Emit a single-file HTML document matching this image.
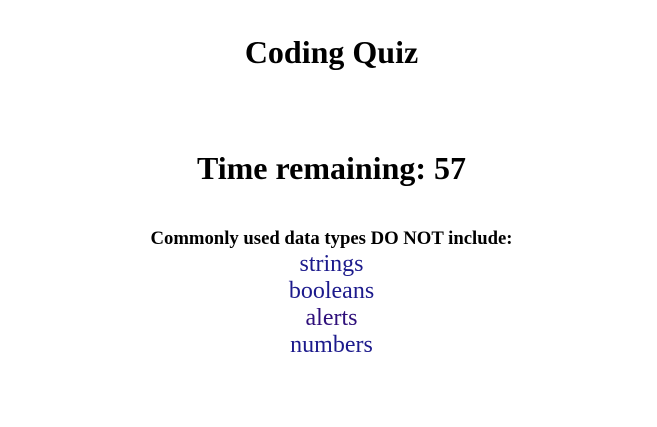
<!DOCTYPE html>
<html><head><style>
body{margin:0;width:657px;height:427px;background:#fff;font-family:"Liberation Serif",serif;position:relative;text-align:center;color:#000}
div{position:absolute;left:3px;width:657px;white-space:nowrap}
.h{font-weight:bold;font-size:32px;line-height:36px}
.q{font-weight:bold;font-size:18.7px;line-height:22px;top:228px}
.a{font-size:24px;line-height:27px;color:#1c1a8c}
</style></head><body>
<div class="h" style="top:34px">Coding Quiz</div>
<div class="h" style="top:150px">Time remaining: 57</div>
<div class="q">Commonly used data types DO NOT include:</div>
<div class="a" style="top:251px">strings</div>
<div class="a" style="top:278px">booleans</div>
<div class="a" style="top:305px;color:#2e0f7a">alerts</div>
<div class="a" style="top:332px">numbers</div>
</body></html>
